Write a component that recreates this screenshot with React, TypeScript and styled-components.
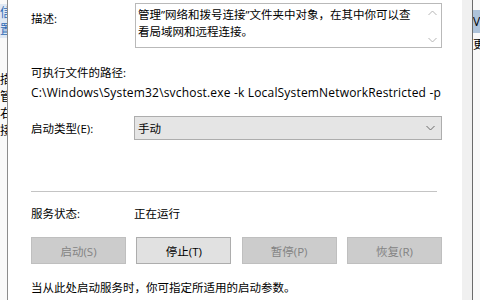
import styled, { createGlobalStyle } from 'styled-components';

const GlobalStyle = createGlobalStyle`
  html, body {
    margin: 0;
    padding: 0;
  }
  body {
    width: 480px;
    height: 300px;
    overflow: hidden;
    background: #ffffff;
    font-family: "Open Sans", "Noto Sans CJK SC", sans-serif;
    font-size: 11.5px;
    color: #000000;
  }
`;

const Screen = styled.div`
  display: flex;
  width: 480px;
  height: 300px;
  overflow: hidden;
`;

/* slivers of the windows behind the dialog */
const BackWindow = styled.div`
  flex: none;
  width: 7px;
  background: #f9f9f9;
  display: flex;
  flex-direction: column;
  overflow: hidden;
  white-space: nowrap;
  line-height: 17px;
  font-size: 12px;
`;

const BackItem = styled.div<{ $hl?: boolean; $top?: number }>`
  margin-top: ${p => p.$top ?? 0}px;
  color: ${p => (p.$hl ? '#2c68b5' : '#000000')};
  background: ${p => (p.$hl ? '#dfe8f3' : 'transparent')};
`;

const RightItem = styled.div<{ $hl?: boolean; $top?: number }>`
  margin-top: ${p => p.$top ?? 0}px;
  height: ${p => (p.$hl ? '23px' : '17px')};
  line-height: ${p => (p.$hl ? '23px' : '17px')};
  background: ${p => (p.$hl ? '#aec3da' : 'transparent')};
`;

const Edge = styled.div<{ $c: string }>`
  flex: none;
  width: 1px;
  background: ${p => p.$c};
`;

const FrameSide = styled.div`
  flex: none;
  width: 10px;
  background: #f0f0f0;
`;

const Page = styled.div`
  flex: none;
  width: 454px;
  box-sizing: border-box;
  padding: 3px 20px 0 23px;
  background: #ffffff;
  display: flex;
  flex-direction: column;
`;

const FieldRow = styled.div<{ $top?: number }>`
  display: grid;
  grid-template-columns: 103px 1fr;
  align-items: center;
  margin-top: ${p => p.$top ?? 0}px;
`;

const Label = styled.div<{ $pad?: number }>`
  line-height: 17px;
  white-space: nowrap;
  align-self: ${p => (p.$pad ? 'start' : 'center')};
  padding-top: ${p => p.$pad ?? 0}px;
`;

const Text = styled.div<{ $top?: number }>`
  line-height: 17px;
  white-space: nowrap;
  margin-top: ${p => p.$top ?? 0}px;
`;

const PathText = styled(Text)`
  font-size: 12px;
  letter-spacing: 0.18px;
`;

const DescBox = styled.div`
  margin-left: 1px;
  height: 45px;
  box-sizing: border-box;
  border: 1px solid #b9b9b9;
  display: flex;
`;

const DescText = styled.div`
  flex: 1;
  padding: 2px 0 0 2px;
  line-height: 17px;
  white-space: nowrap;
  overflow: hidden;
`;

const ScrollBar = styled.div`
  flex: none;
  width: 17px;
  background: #ffffff;
  display: flex;
  flex-direction: column;
  justify-content: space-between;
  align-items: center;
  padding: 6px 0 4px;
`;

const Combo = styled.div`
  height: 24px;
  box-sizing: border-box;
  border: 1px solid #adadad;
  background: #e5e5e5;
  display: flex;
  align-items: center;
  justify-content: space-between;
  padding: 0 6px 0 3px;
`;

const Separator = styled.div<{ $top: number }>`
  margin-top: ${p => p.$top}px;
  margin-right: 5px;
  height: 1px;
  background: #c4c4c4;
`;

const ButtonRow = styled.div<{ $top: number }>`
  margin-top: ${p => p.$top}px;
  display: flex;
  justify-content: space-between;
`;

const Button = styled.button<{ $disabled?: boolean }>`
  width: 95px;
  height: 27px;
  box-sizing: border-box;
  margin: 0;
  padding: 0;
  font: inherit;
  border: 1px solid ${p => (p.$disabled ? '#bfbfbf' : '#adadad')};
  background: ${p => (p.$disabled ? '#cccccc' : '#e1e1e1')};
  color: ${p => (p.$disabled ? '#838383' : '#000000')};
`;

const Chevron = ({ up, color }: { up?: boolean; color: string }) => (
  <svg width="9" height="6" viewBox="0 0 9 6">
    <polyline
      points={up ? '0.5,5 4.5,1 8.5,5' : '0.5,1 4.5,5 8.5,1'}
      fill="none"
      stroke={color}
      strokeWidth="1"
    />
  </svg>
);

export default function App() {
  return (
    <>
      <GlobalStyle />
      <Screen>
        <BackWindow>
          <BackItem $hl $top={4}>信</BackItem>
          <BackItem $hl>置</BackItem>
          <BackItem $top={33}>描</BackItem>
          <BackItem>管</BackItem>
          <BackItem>右</BackItem>
          <BackItem>接</BackItem>
        </BackWindow>
        <Edge $c="#8c8c8c" />
        <Page>
          <FieldRow>
            <Label $pad={7}>描述:</Label>
            <DescBox>
              <DescText>
                <div>管理”网络和拨号连接”文件夹中对象，在其中你可以查</div>
                <div>看局域网和远程连接。</div>
              </DescText>
              <ScrollBar>
                <Chevron up color="#b5b5b5" />
                <Chevron color="#b5b5b5" />
              </ScrollBar>
            </DescBox>
          </FieldRow>
          <Text $top={16}>可执行文件的路径:</Text>
          <PathText $top={3}>C:\Windows\System32\svchost.exe -k LocalSystemNetworkRestricted -p</PathText>
          <FieldRow $top={15}>
            <Label>启动类型(E):</Label>
            <Combo>
              <span>手动</span>
              <Chevron color="#6a6a6a" />
            </Combo>
          </FieldRow>
          <Separator $top={51} />
          <FieldRow $top={13}>
            <Label>服务状态:</Label>
            <Text>正在运行</Text>
          </FieldRow>
          <ButtonRow $top={15}>
            <Button $disabled>启动(S)</Button>
            <Button>停止(T)</Button>
            <Button $disabled>暂停(P)</Button>
            <Button $disabled>恢复(R)</Button>
          </ButtonRow>
          <Text $top={15}>当从此处启动服务时，你可指定所适用的启动参数。</Text>
        </Page>
        <FrameSide />
        <Edge $c="#6b6b6b" />
        <BackWindow>
          <RightItem $hl $top={10}>Ve</RightItem>
          <RightItem $top={3}>更</RightItem>
        </BackWindow>
      </Screen>
    </>
  );
}
